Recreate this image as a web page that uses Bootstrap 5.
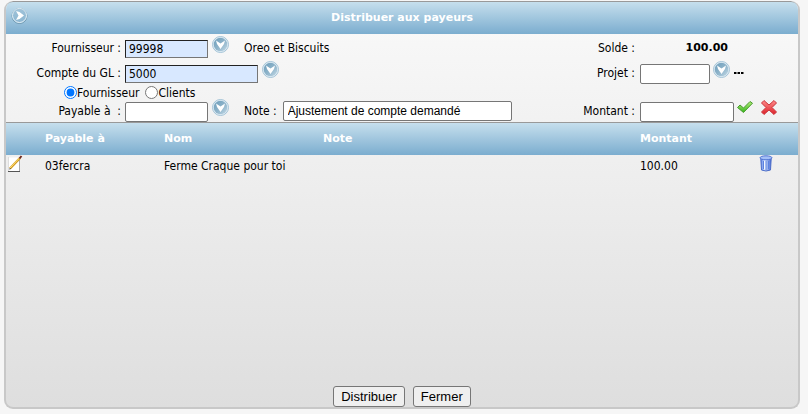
<!DOCTYPE html>
<html lang="fr">
<head>
<meta charset="utf-8">
<meta name="viewport" content="width=device-width, initial-scale=1">
<title>Distribuer aux payeurs</title>
<link rel="stylesheet" href="https://cdn.jsdelivr.net/npm/bootstrap@5.3.0/dist/css/bootstrap.min.css">
<style>
body { background: #f6f6f6; color: #000; font: 12px/16px Tahoma, "DejaVu Sans Condensed", "Noto Sans", sans-serif; padding: 1px 8px 5px 4px; }
.panel { border: 2px solid #c8c8c8; border-top: 0; border-radius: 9px; background: linear-gradient(#fafafa, #dedede); overflow: hidden; }
.bar-blue { background: linear-gradient(#c6dfed, #7badcf); border-top: 1px solid #999; color: #fff; font: bold 11px/14px Verdana, "DejaVu Sans", sans-serif; }
.titlebar { height: 33px; margin: 0 -2px; border-left: 1px solid #999; border-right: 1px solid #999; border-radius: 9px 9px 0 0; }
.title-go { left: 6px; top: 5px; }
.icon-btn { border: 0; padding: 0; background: none; line-height: 0; flex: none; }
.icon-btn svg { display: block; }
.form-area { padding-top: 2px; }
.line { height: 25px; }
.line-last { height: 23px; }
.line-radio { height: 13px; padding-left: 58px; }
.col-left { width: 238px; }
.col-right { width: 227px; }
.lab { width: 115px; text-align: right; white-space: pre; flex: none; margin-right: 4px; }
.lab-right { width: 64px; text-align: right; flex: none; margin-right: 5px; }
.line > div > label, .line > div > span { padding-top: 4px; }
.box { height: 20px; border: 1px solid #767676; border-radius: 2px; background: #fff; padding: 0 4px; color: #000; font: 12px/16px "Liberation Sans", Arial, sans-serif; flex: none; margin-top: 3px; }
.box-key { height: 18px; background: #d8e8ff; border-color: #222 #767676 #767676 #222; border-radius: 0; padding: 0 3px; font: 12px/16px Tahoma, "DejaVu Sans Condensed", sans-serif; margin-top: 4px; }
.w-code { width: 83px; }
.w-gl { width: 133px; }
.w-note { width: 229px; margin-top: 2px; }
.w-proj { width: 70px; }
.w-amt { width: 94px; }
.gap-note { margin-right: 6px; }
.gap-icon { margin-left: 3px; }
.radio { width: 13px; height: 13px; margin: 0; accent-color: #0075ff; }
.gap-radio { margin-left: 6px; }
.strong-num { font: bold 11px/16px Verdana, "DejaVu Sans", sans-serif; width: 88px; text-align: right; }
.lines { table-layout: fixed; border-collapse: separate; border-spacing: 0; }
.lines th { height: 32px; padding: 0 0 1px; }
.list-area { border-top: 1px solid #999; min-height: 264px; }
.lines thead { border-top: 0; }
.lines td { padding: 2px 0; height: 20px; }
.lines td.tool { padding: 0; vertical-align: top; }
.c-tool { width: 39px; } .c-code { width: 119px; } .c-name { width: 159px; } .c-amt { width: 119px; }
.push { height: 21px; padding: 0 7px; border: 1px solid #767676; border-radius: 3px; background: #efefef; color: #000; font: 13px/18px "Liberation Sans", Arial, sans-serif; }
</style>
</head>
<body>
<svg width="0" height="0" class="position-absolute" aria-hidden="true">
  <defs>
    <linearGradient id="ball" x2="1" y2="1"><stop stop-color="#6c9dba"/><stop offset=".55" stop-color="#90b5cb"/><stop offset="1" stop-color="#c4dae7"/></linearGradient>
    <linearGradient id="green" x2="0" y2="1"><stop stop-color="#b5ed7b"/><stop offset="1" stop-color="#35b51c"/></linearGradient>
    <linearGradient id="red" x2="0" y2="1"><stop stop-color="#ff8b8b"/><stop offset="1" stop-color="#dc2028"/></linearGradient>
    <linearGradient id="blue"><stop stop-color="#5c82e6"/><stop offset=".4" stop-color="#d4e4ff"/><stop offset="1" stop-color="#4468d0"/></linearGradient>
    <symbol id="drop" viewBox="0 0 17 17"><circle cx="8.500" cy="8.500" r="8" fill="#e3eef5" stroke="#a3c3d6" stroke-width="1"/><circle cx="8.500" cy="8.500" r="6.800" fill="url(#ball)"/><path d="M4 4.500L8.500 7.500 13 4.500l-1 3.500-3.500 5L5 8z" fill="#fff"/></symbol>
  </defs>
</svg>
<main class="panel">
  <header class="bar-blue titlebar position-relative d-flex align-items-center justify-content-center">
    <button type="button" class="icon-btn title-go position-absolute" aria-label="Continuer"><svg width="17" height="17" viewBox="0 0 17 17"><circle cx="8.500" cy="9" r="7.500" fill="#83adc8" fill-opacity=".45" stroke="#7099b1"/><circle cx="8.500" cy="8.500" r="7" fill="none" stroke="#e8f3f9"/><path d="M5 4l3.500 1L13 8.500 8.500 12 5 13l2.500-4.500z" fill="#fff"/></svg></button>
    <span>Distribuer aux payeurs</span>
  </header>
  <form class="form-area">
    <div class="line d-flex">
      <div class="col-left d-flex align-items-start"><label class="lab" for="four">Fournisseur :</label><input id="four" class="box box-key w-code" value="99998"><button type="button" class="icon-btn ms-1" aria-label="Choisir le fournisseur"><svg width="17" height="17"><use href="#drop"/></svg></button></div>
      <div class="flex-grow-1 d-flex"><span>Oreo et Biscuits</span></div>
      <div class="col-right d-flex align-items-start"><span class="lab-right">Solde :</span><span class="strong-num">100.00</span></div>
    </div>
    <div class="line d-flex">
      <div class="flex-grow-1 d-flex align-items-start"><label class="lab" for="gl">Compte du GL :</label><input id="gl" class="box box-key w-gl" value="5000"><button type="button" class="icon-btn ms-1" aria-label="Choisir le compte"><svg width="17" height="17"><use href="#drop"/></svg></button></div>
      <div class="col-right d-flex align-items-start"><label class="lab-right" for="proj">Projet :</label><input id="proj" class="box w-proj"><button type="button" class="icon-btn gap-icon" aria-label="Choisir le projet"><svg width="17" height="17"><use href="#drop"/></svg></button><button type="button" class="icon-btn gap-icon mt-2" aria-label="Plus de projets"><svg width="11" height="6" viewBox="0 0 11 6"><path d="M1 3h2.500v2H1zm3.500 0H7v2H4.500zM8 3h2.500v2H8z"/></svg></button></div>
    </div>
    <div class="line-radio d-flex align-items-center">
      <input class="radio" type="radio" name="kind" id="kf" checked><label for="kf">Fournisseur</label>
      <input class="radio gap-radio" type="radio" name="kind" id="kc"><label for="kc">Clients</label>
    </div>
    <div class="line line-last d-flex">
      <div class="col-left d-flex align-items-start"><label class="lab" for="pay">Payable à  :</label><input id="pay" class="box w-code"><button type="button" class="icon-btn ms-1" aria-label="Choisir le payeur"><svg width="17" height="17"><use href="#drop"/></svg></button></div>
      <div class="flex-grow-1 d-flex align-items-start"><label class="gap-note" for="note">Note :</label><input id="note" class="box w-note" value="Ajustement de compte demandé"></div>
      <div class="col-right d-flex align-items-start"><label class="lab-right" for="amt">Montant :</label><input id="amt" class="box w-amt"><button type="button" class="icon-btn gap-icon" aria-label="Accepter"><svg width="16" height="17" viewBox="0 0 16 17"><path d="M.5 8.500L3 6l3.500 3L13 2.500 15.500 4.200 6.500 13.500z" fill="url(#green)" stroke="#4b9a32" stroke-linejoin="round"/></svg></button><button type="button" class="icon-btn ms-2" aria-label="Annuler"><svg width="16" height="17" viewBox="0 0 16 17"><path d="M3 1.500L8 6l5-4.500L15.500 4 11 8.500l4.500 4.500-2.500 2.500-5-4.500-5 4.500L.5 13 5 8.500.5 4z" fill="url(#red)" stroke="#c9353c" stroke-linejoin="round"/></svg></button></div>
    </div>
  </form>
  <div class="list-area">
    <table class="lines w-100">
      <colgroup><col class="c-tool"><col class="c-code"><col class="c-name"><col><col class="c-amt"><col class="c-tool"></colgroup>
      <thead class="bar-blue"><tr><th></th><th>Payable à</th><th>Nom</th><th>Note</th><th>Montant</th><th></th></tr></thead>
      <tbody><tr>
        <td class="tool"><button type="button" class="icon-btn" aria-label="Modifier"><svg width="17" height="18" viewBox="0 0 17 18"><path d="M2 2.500h12v14H2z" fill="#fff"/><path d="M2 16.500h12" stroke="#555"/><path d="M13.500 5v11" stroke="#aaa"/><path d="M2.500 2v14" stroke="#ddd"/><path d="M4 13.500L14 3" stroke="#d39a20" stroke-width="2.400"/><path d="M4 13L13.500 3" stroke="#ffe278"/><path d="M13.500 3.500L15.500 1" stroke="#702a20" stroke-width="2"/><path d="M3 14.500l1-1.500 1 1z" fill="#333"/></svg></button></td>
        <td>03fercra</td><td>Ferme Craque pour toi</td><td></td><td>100.00</td>
        <td class="tool"><button type="button" class="icon-btn" aria-label="Supprimer"><svg width="14" height="17" viewBox="0 0 14 17"><path d="M1.800 3.500h10.400L11.500 15q-4.500 2-9 0z" fill="url(#blue)" stroke="#4c6dc8"/><path d="M4.500 6v8M7 6v9M9.500 6v8" stroke="#5c83e0"/><path d="M5.700 5.500v9" stroke="#fff"/><ellipse cx="7" cy="2.800" rx="6" ry="2" fill="#a4bff6" stroke="#4e72d2"/></svg></button></td>
      </tr></tbody>
    </table>
  </div>
  <footer class="d-flex justify-content-center gap-2"><button type="button" class="push">Distribuer</button><button type="button" class="push">Fermer</button></footer>
</main>
<script src="https://cdn.jsdelivr.net/npm/bootstrap@5.3.0/dist/js/bootstrap.bundle.min.js"></script>
</body>
</html>
